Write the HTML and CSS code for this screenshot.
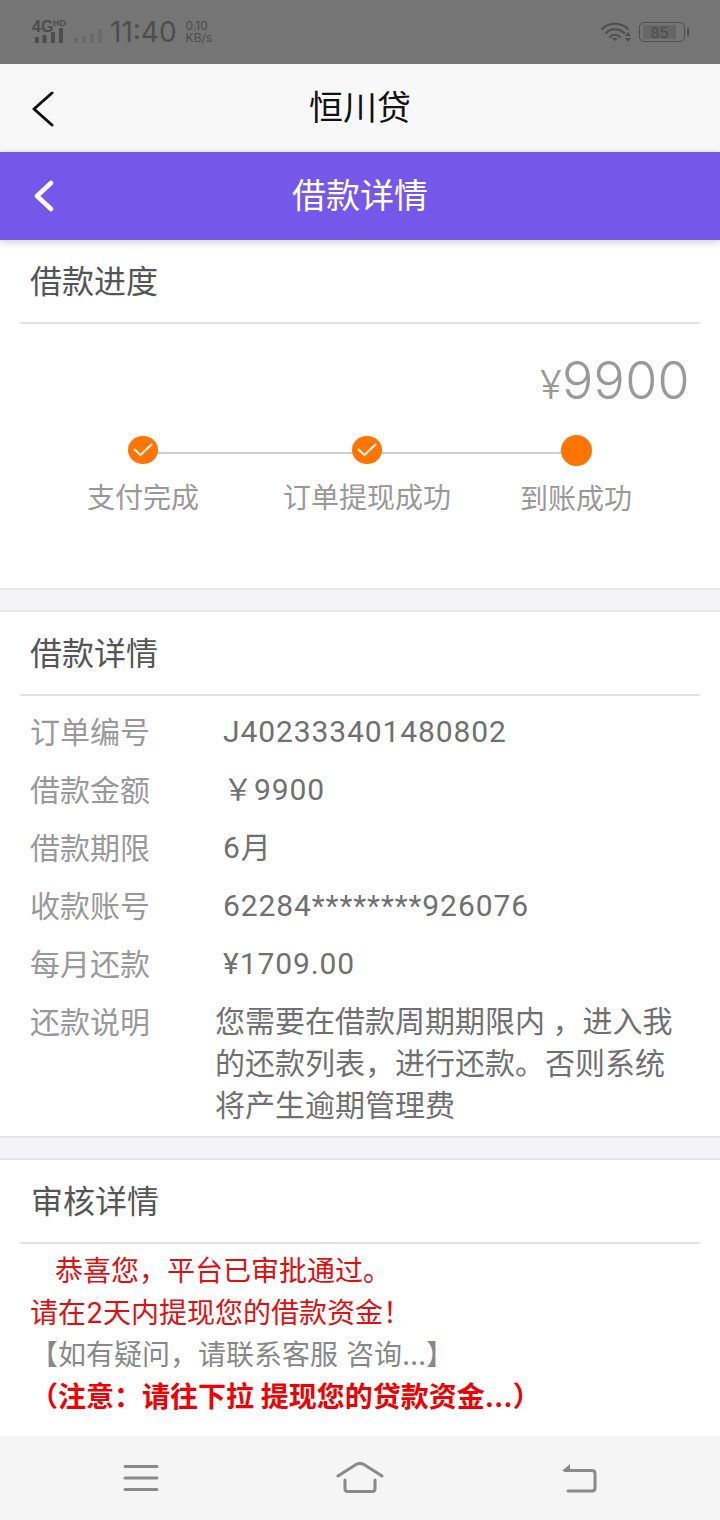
FILE: index.html
```html
<!DOCTYPE html>
<html lang="zh-CN">
<head>
  <meta charset="UTF-8" />
  <title>借款详情</title>
  <link rel="stylesheet" href="styles.css">
</head>
<body>
  <div class="status-bar">
    <div class="status-left">
      <svg class="signal" width="72" height="30" viewBox="0 -4 72 30">
        <text x="1" y="15" class="net">4G</text>
        <text x="22" y="9" class="hd">HD</text>
        <rect x="4" y="20" width="4" height="6" fill="#4d4d4d"/>
        <rect x="11.500" y="18" width="4" height="8" fill="#4d4d4d"/>
        <rect x="20" y="15" width="4" height="11" fill="#4d4d4d"/>
        <rect x="28" y="11" width="4" height="15" fill="#4d4d4d"/>
        <rect x="43" y="21" width="4" height="5" fill="#6a6a6a"/>
        <rect x="51" y="19" width="4" height="7" fill="#6a6a6a"/>
        <rect x="59" y="16" width="4" height="10" fill="#6a6a6a"/>
        <rect x="67" y="12" width="4" height="14" fill="#6a6a6a"/>
      </svg>
      <span class="clock">11:40</span>
      <span class="speed">0.10<br>KB/s</span>
    </div>
    <div class="status-right">
      <svg width="32" height="22" viewBox="0 0 32 22" fill="none" stroke="#4d4d4d" stroke-width="2" stroke-linecap="round">
        <path d="M1 8 C8 1 20 1 27 8"/>
        <path d="M5 12 C10 7 18 7 23 12"/>
        <path d="M9 16 C12 13 16 13 19 16"/>
        <path d="M11 17 L14 20 L17 17 Z" fill="#4d4d4d" stroke="none"/>
        <path d="M24 15 L27 11 L30 15 Z M24 17 L30 17 L27 21 Z" fill="#4d4d4d" stroke="none"/>
      </svg>
      <div class="battery"><span class="battery-fill">85</span></div>
      <span class="battery-tip"></span>
    </div>
  </div>

  <div class="web-head">
    <svg class="web-back" width="24" height="36" viewBox="0 0 24 36" fill="none" stroke="#111" stroke-width="3" stroke-linecap="round" stroke-linejoin="round">
      <path d="M21 2 L3 18 L21 34"/>
    </svg>
    <span>恒川贷</span>
  </div>

  <div class="app-head">
    <svg class="app-back" width="22" height="32" viewBox="0 0 22 32" fill="none" stroke="#fff" stroke-width="4.5" stroke-linecap="round" stroke-linejoin="round">
      <path d="M18 3 L4 16 L18 29"/>
    </svg>
    <span>借款详情</span>
  </div>

  <section class="card card-progress">
    <h3 class="card-title">借款进度</h3>
    <div class="amount"><small>¥</small>9900</div>
    <div class="steps">
      <div class="step step-a">
        <span class="dot"><svg width="20" height="14" viewBox="0 0 20 14" fill="none" stroke="#fff" stroke-width="2"><path d="M1 6 L7.500 12 L19 1"/></svg></span>
        <p>支付完成</p>
      </div>
      <div class="step step-b">
        <span class="dot"><svg width="20" height="14" viewBox="0 0 20 14" fill="none" stroke="#fff" stroke-width="2"><path d="M1 6 L7.500 12 L19 1"/></svg></span>
        <p>订单提现成功</p>
      </div>
      <div class="step step-c">
        <span class="dot dot-big"></span>
        <p>到账成功</p>
      </div>
    </div>
  </section>

  <section class="card card-detail">
    <h3 class="card-title">借款详情</h3>
    <div class="rows">
      <div class="row"><label>订单编号</label><span>J402333401480802</span></div>
      <div class="row"><label>借款金额</label><span>￥9900</span></div>
      <div class="row"><label>借款期限</label><span>6月</span></div>
      <div class="row"><label>收款账号</label><span>62284********926076</span></div>
      <div class="row"><label>每月还款</label><span>¥1709.00</span></div>
      <div class="row row-note"><label>还款说明</label><span>您需要在借款周期期限内 ，进入我的还款列表，进行还款。否则系统将产生逾期管理费</span></div>
    </div>
  </section>

  <section class="card card-audit">
    <h3 class="card-title">审核详情</h3>
    <div class="audit">
      <p class="red first">恭喜您，平台已审批通过。</p>
      <p class="red">请在2天内提现您的借款资金！</p>
      <p class="gray">【如有疑问，请联系客服 咨询...】</p>
      <p class="red bold">（注意：请往下拉 提现您的贷款资金...）</p>
    </div>
  </section>

  <div class="nav-bar">
    <svg width="36" height="28" viewBox="0 0 36 28" fill="none" stroke="#8a8a8a" stroke-width="3" stroke-linecap="round">
      <path d="M2 2.500 H34 M2 14 H34 M2 25.500 H34"/>
    </svg>
    <svg width="48" height="32" viewBox="0 0 48 32" fill="none" stroke="#8a8a8a" stroke-width="3" stroke-linecap="round" stroke-linejoin="round">
      <path d="M2 14 L20 2.500 Q24 0.500 28 2.500 L46 14"/>
      <path d="M9 18 V26.500 Q9 29.500 12 29.500 H36 Q39 29.500 39 26.500 V18"/>
    </svg>
    <svg width="36" height="30" viewBox="0 0 36 30" fill="none" stroke="#8a8a8a" stroke-width="3" stroke-linecap="round" stroke-linejoin="round">
      <path d="M3 7.500 H30 Q33 7.500 33 10.500 V25 Q33 28 30 28 H6"/>
      <path d="M0 8 L8 1 V8 Z" fill="#8a8a8a" stroke="none"/>
    </svg>
  </div>
</body>
</html>
```

FILE: styles.css
```css
* { box-sizing: border-box; }
html, body { margin: 0; padding: 0; }
body {
  width: 720px;
  height: 1520px;
  overflow: hidden;
  background: #f3f3f8;
  font-family: Inter, "Noto Sans CJK SC", sans-serif;
  display: flex;
  flex-direction: column;
}
p, h3 { margin: 0; font-weight: normal; }

.status-bar {
  height: 64px;
  background: #757575;
  color: #4d4d4d;
  display: flex;
  justify-content: space-between;
  align-items: center;
  padding: 0 31px;
}
.status-left { display: flex; align-items: center; }
.signal { margin-top: -8px; }
.net { font-family: "Liberation Sans", sans-serif; font-size: 16px; font-weight: bold; fill: #4d4d4d; }
.hd { font-family: "Liberation Sans", sans-serif; font-size: 9px; font-weight: bold; fill: #4d4d4d; }
.clock { font-size: 28px; margin-left: 7px; }
.speed { font-size: 12px; line-height: 12px; margin-left: 9px; }
.status-right { display: flex; align-items: center; }
.battery {
  width: 46px;
  height: 20px;
  margin-left: 6px;
  border: 1px solid #4d4d4d;
  border-radius: 5px;
  padding: 2px 8px 2px 3px;
}
.battery-fill {
  display: block;
  height: 14px;
  background: #666;
  font-size: 15px;
  line-height: 15px;
  text-align: center;
}
.battery-tip {
  width: 2px;
  height: 8px;
  margin-left: 2px;
  background: #4d4d4d;
}

.web-head {
  height: 88px;
  background: #f8f8f8;
  display: flex;
  align-items: center;
  justify-content: center;
  position: relative;
  font-size: 34px;
  line-height: 84px;
  color: #111;
}
.web-back { position: absolute; left: 31px; top: 27px; }

.app-head {
  height: 88px;
  background: #7558ea;
  color: #fff;
  font-size: 34px;
  line-height: 84px;
  display: flex;
  align-items: center;
  justify-content: center;
  position: relative;
  box-shadow: 0 2px 8px rgba(0, 0, 0, .2);
  z-index: 1;
}
.app-back { position: absolute; left: 33px; top: 28px; }

.card {
  background: #fff;
  border-top: 2px solid #e6e6ea;
  border-bottom: 2px solid #e6e6ea;
  margin-bottom: 20px;
}
.card-title {
  height: 84px;
  margin: 0 20px;
  padding: 0 10px 5px;
  display: flex;
  align-items: center;
  font-size: 32px;
  color: #555;
  border-bottom: 2px solid #e2e2e2;
}
.card-audit .card-title { padding-left: 11px; }

.card-progress { height: 350px; border-top: 0; }
.amount {
  text-align: right;
  padding: 27px 30px 0 0;
  font-size: 52px;
  font-weight: 300;
  letter-spacing: .3px;
  line-height: 60px;
  color: #999;
}
.amount small { font-size: 40px; }

.steps {
  position: relative;
  height: 90px;
  margin-top: 19px;
  display: flex;
  color: #999;
  font-size: 28px;
}
.steps::before {
  content: "";
  position: absolute;
  left: 143px;
  width: 433px;
  top: 18px;
  height: 2px;
  background: #cfcfcf;
}
.step {
  position: absolute;
  top: 0;
  display: flex;
  flex-direction: column;
  align-items: center;
  transform: translateX(-50%);
}
.step p { margin-top: 13px; line-height: 40px; white-space: nowrap; }
.step-a { left: 143px; }
.step-b { left: 367px; }
.step-c { left: 576px; }
.dot {
  position: relative;
  width: 30px;
  height: 28px;
  margin: 2px 0 1px;
  border-radius: 50%;
  background: #ff7500;
  display: flex;
  align-items: center;
  justify-content: center;
}
.dot-big { width: 31px; height: 31px; margin: 1px 0 0; }

.card-detail { height: 528px; }
.rows { padding-top: 7px; }
.row {
  display: flex;
  margin: 0 30px;
  font-size: 30px;
  line-height: 58px;
  color: #999;
}
.row label { width: 193px; flex: none; }
.row span { color: #707070; font-family: Roboto, "Noto Sans CJK SC", sans-serif; letter-spacing: .9px; }
.row-note { line-height: 42px; padding-top: 8px; }
.row-note label { width: 185px; }
.row-note span { width: 465px; letter-spacing: 0; }

.card-audit { flex: 1; margin: 0; border-bottom: 0; }
.audit { margin: 6px 0 0 30px; font-size: 28px; line-height: 42px; }
.audit .red { color: #e01010; }
.audit .first { text-indent: 25px; }
.audit .gray { color: #888; }
.audit .bold { font-weight: bold; color: #f00000; }

.nav-bar {
  height: 84px;
  flex: none;
  background: #f5f5f5;
  display: flex;
  align-items: center;
  position: relative;
  padding-left: 123px;
}
.nav-bar svg:nth-child(2) { margin-left: 177px; }
.nav-bar svg:nth-child(3) { margin-left: 178px; }
```
